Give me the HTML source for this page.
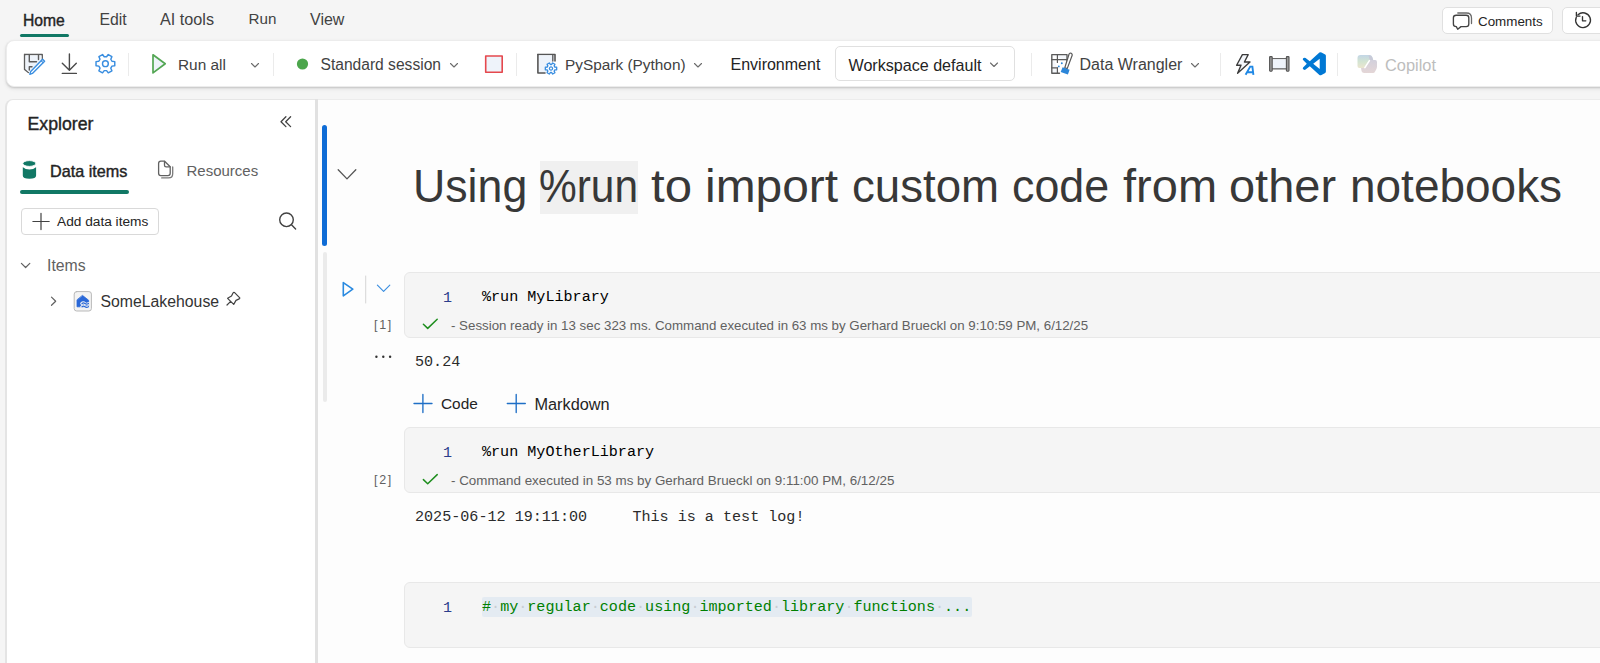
<!DOCTYPE html>
<html><head><meta charset="utf-8">
<style>
*{margin:0;padding:0;box-sizing:border-box}
html,body{width:1600px;height:663px;overflow:hidden;background:#f5f5f5;font-family:"Liberation Sans",sans-serif;color:#242424}
.a{position:absolute}
.t{position:absolute;white-space:nowrap;line-height:1}
.hw{top:164px;font-size:45.8px;color:#383838;transform-origin:0 0}
.sb{-webkit-text-stroke:0.4px currentColor}
.ws{color:#c8cdd2}
.m{font-family:"Liberation Mono",monospace}
#ico{position:absolute;left:0;top:0;width:1600px;height:663px;pointer-events:none}
</style></head><body>

<!-- top tabs -->
<div class="t sb" style="left:23px;top:12.5px;font-size:15.7px;color:#242424">Home</div>
<div class="a" style="left:20px;top:34px;width:49px;height:3px;border-radius:2px;background:#117865"></div>
<div class="t" style="left:99.5px;top:12px;font-size:15.8px;color:#424242">Edit</div>
<div class="t" style="left:160px;top:11px;font-size:16.2px;color:#424242">AI tools</div>
<div class="t" style="left:248.5px;top:11px;font-size:15.2px;color:#424242">Run</div>
<div class="t" style="left:310px;top:12px;font-size:16px;color:#424242">View</div>

<!-- comments / history buttons -->
<div class="a" style="left:1441.5px;top:7px;width:111px;height:27px;border:1px solid #e0e0e0;border-radius:5px;background:#fff"></div>
<div class="t" style="left:1478px;top:15px;font-size:13.4px;color:#242424">Comments</div>
<div class="a" style="left:1562px;top:7px;width:60px;height:27px;border:1px solid #e0e0e0;border-radius:5px;background:#fff"></div>

<!-- toolbar -->
<div class="a" style="left:5.5px;top:40px;width:1610px;height:46.5px;background:#fff;border-radius:8px;box-shadow:0 1px 2px rgba(0,0,0,.14),0 2px 4px rgba(0,0,0,.08);border:1px solid #ececec"></div>
<div class="t" style="left:178px;top:56.5px;font-size:15.4px;color:#424242">Run all</div>
<div class="t" style="left:320.5px;top:56.5px;font-size:15.6px;color:#424242">Standard session</div>
<div class="t" style="left:565px;top:56.5px;font-size:15.4px;color:#424242">PySpark (Python)</div>
<div class="t" style="left:730.5px;top:56.5px;font-size:16px;color:#242424">Environment</div>
<div class="a" style="left:835px;top:45.5px;width:180px;height:35px;border:1px solid #e0e0e0;border-radius:5px"></div>
<div class="t" style="left:848.5px;top:56.5px;font-size:16.1px;color:#242424">Workspace default</div>
<div class="t" style="left:1079.5px;top:56.5px;font-size:16px;color:#424242">Data Wrangler</div>
<div class="t" style="left:1385px;top:56.5px;font-size:16.4px;color:#bdbdbd">Copilot</div>
<!-- separators -->
<div class="a" style="left:128px;top:52.5px;width:1px;height:23px;background:#ebebeb"></div>
<div class="a" style="left:273px;top:52.5px;width:1px;height:23px;background:#ebebeb"></div>
<div class="a" style="left:516px;top:52.5px;width:1px;height:23px;background:#ebebeb"></div>
<div class="a" style="left:1030.5px;top:52.5px;width:1px;height:23px;background:#ebebeb"></div>
<div class="a" style="left:1220px;top:52.5px;width:1px;height:23px;background:#ebebeb"></div>
<div class="a" style="left:1336.5px;top:52.5px;width:1px;height:23px;background:#ebebeb"></div>

<!-- explorer panel -->
<div class="a" style="left:5px;top:99px;width:312px;height:600px;background:#fff;border:1px solid #e6e6e6;border-left:2px solid #e4e4e4;border-radius:8px 0 0 0"></div>
<div class="a" style="left:315px;top:99px;width:3px;height:570px;background:#e1e1e1"></div>
<div class="t sb" style="left:27.5px;top:116px;font-size:17.7px;color:#242424">Explorer</div>
<div class="t sb" style="left:50px;top:163px;font-size:16.2px;color:#242424">Data items</div>
<div class="a" style="left:20px;top:190px;width:109px;height:4px;border-radius:2px;background:#117865"></div>
<div class="t" style="left:186.5px;top:163px;font-size:15px;color:#616161">Resources</div>
<div class="a" style="left:20.5px;top:208px;width:138px;height:27px;border:1px solid #d9d9d9;border-radius:4px"></div>
<div class="t" style="left:57px;top:215px;font-size:13.7px;color:#242424">Add data items</div>
<div class="t" style="left:47px;top:257.5px;font-size:15.8px;color:#616161">Items</div>
<div class="t" style="left:100.5px;top:293.5px;font-size:15.8px;color:#333">SomeLakehouse</div>

<!-- notebook area -->
<div class="a" style="left:318px;top:99px;width:1300px;height:600px;background:#fdfdfd;border-top:1px solid #ececec"></div>
<div class="a" style="left:322px;top:125px;width:5px;height:121px;border-radius:3px;background:#0f6cd6"></div>
<div class="a" style="left:322.5px;top:251.5px;width:4.5px;height:150px;border-radius:3px;background:#ebebeb"></div>

<!-- heading -->
<div class="a" style="left:539.5px;top:161px;width:98.5px;height:52.5px;background:#f0f0f0"></div>
<div class="t hw" style="left:412.86px;transform:scaleX(0.9759)">Using</div>
<div class="t hw" style="left:538.98px;transform:scaleX(0.9267)">%run</div>
<div class="t hw" style="left:651.01px;transform:scaleX(1.0738)">to</div>
<div class="t hw" style="left:704.94px;transform:scaleX(1.0460)">import</div>
<div class="t hw" style="left:851.96px;transform:scaleX(0.9967)">custom</div>
<div class="t hw" style="left:1011.97px;transform:scaleX(0.9776)">code</div>
<div class="t hw" style="left:1122.99px;transform:scaleX(1.0268)">from</div>
<div class="t hw" style="left:1229.00px;transform:scaleX(1.0253)">other</div>
<div class="t hw" style="left:1349.96px;transform:scaleX(1.0036)">notebooks</div>


<!-- cell 1 -->
<div class="a" style="left:404px;top:271.5px;width:1300px;height:66px;background:#f5f5f5;border:1px solid #e8e8e8;border-radius:6px"></div>
<div class="t m" style="left:443px;top:290.5px;font-size:15.1px;color:#2b3d8c">1</div>
<div class="t m" style="left:482px;top:290px;font-size:15.1px;color:#000">%run MyLibrary</div>
<div class="t" style="left:451px;top:318.5px;font-size:13.3px;color:#616161">- Session ready in 13 sec 323 ms. Command executed in 63 ms by Gerhard Brueckl on 9:10:59 PM, 6/12/25</div>
<div class="t" style="left:374px;top:318.5px;font-size:12.5px;color:#616161;letter-spacing:1.7px">[1]</div>
<div class="t m" style="left:415px;top:355px;font-size:15.1px;color:#2b2b2b">50.24</div>
<div class="t" style="left:441px;top:396px;font-size:15.4px;color:#242424">Code</div>
<div class="t" style="left:534.5px;top:396px;font-size:16.3px;color:#242424">Markdown</div>

<!-- cell 2 -->
<div class="a" style="left:404px;top:426.5px;width:1300px;height:66px;background:#f5f5f5;border:1px solid #e8e8e8;border-radius:6px"></div>
<div class="t m" style="left:443px;top:445.5px;font-size:15.1px;color:#2b3d8c">1</div>
<div class="t m" style="left:482px;top:445px;font-size:15.1px;color:#000">%run MyOtherLibrary</div>
<div class="t" style="left:451px;top:473.5px;font-size:13.4px;color:#616161">- Command executed in 53 ms by Gerhard Brueckl on 9:11:00 PM, 6/12/25</div>
<div class="t" style="left:374px;top:473.5px;font-size:12.5px;color:#616161;letter-spacing:1.7px">[2]</div>
<div class="t m" style="left:415px;top:510px;font-size:15.1px;color:#2b2b2b;white-space:pre">2025-06-12 19:11:00     This is a test log!</div>

<!-- cell 3 -->
<div class="a" style="left:404px;top:582px;width:1300px;height:66px;background:#f5f5f5;border:1px solid #e8e8e8;border-radius:6px"></div>
<div class="a" style="left:482px;top:596.5px;width:490px;height:20px;background:#e4ebf2;border-radius:2px"></div>
<div class="t m" style="left:443px;top:600.5px;font-size:15.1px;color:#2b3d8c">1</div>
<div class="t m" style="left:482px;top:600px;font-size:15.1px;color:#008000;white-space:pre">#<span class="ws">·</span>my<span class="ws">·</span>regular<span class="ws">·</span>code<span class="ws">·</span>using<span class="ws">·</span>imported<span class="ws">·</span>library<span class="ws">·</span>functions<span class="ws">·</span>...</div>

<svg id="ico" viewBox="0 0 1600 663" fill="none" stroke-linecap="round" stroke-linejoin="round">
<!-- floppy + pencil -->
<path d="M24.6,54.6 H42.2 V61.5" stroke="#5c5c5c" stroke-width="1.5"/>
<path d="M24.6,54.6 V69.4 L28.4,72.4" stroke="#5c5c5c" stroke-width="1.5"/>
<path d="M25.5,55.5 H41.5 V62 L31,72 H28.6 L25.5,69.2 Z" fill="#eef3fa"/>
<path d="M29.3,54.8 V61.8 H36.5" stroke="#5c5c5c" stroke-width="1.4"/>
<path d="M38.5,54.8 V59.6" stroke="#5c5c5c" stroke-width="1.4"/>
<path d="M29.3,70 V66.8 H32" stroke="#5c5c5c" stroke-width="1.4"/>
<path d="M42.6,59.2 L44.6,61.2 L32.4,73.4 L29.8,74.3 L30.7,71.6 Z" fill="#fff" stroke="#3a8ee0" stroke-width="1.4"/>
<path d="M41.2,60.8 L43.1,62.7" stroke="#3a8ee0" stroke-width="1.1"/>
<!-- download -->
<path d="M69.4,54 V70 M62.3,63.3 L69.4,70.3 L76.3,63.3 M62.3,73.4 H76.4" stroke="#4a4a4a" stroke-width="1.4"/>
<!-- gear -->
<g transform="translate(105.4,63.7)">
<path d="M9.37,-2.09 L9.37,2.09 L6.56,2.44 L5.39,4.46 L6.50,7.07 L2.87,9.16 L1.17,6.90 L-1.17,6.90 L-2.87,9.16 L-6.50,7.07 L-5.39,4.46 L-6.56,2.44 L-9.37,2.09 L-9.37,-2.09 L-6.56,-2.44 L-5.39,-4.46 L-6.50,-7.07 L-2.87,-9.16 L-1.17,-6.90 L1.17,-6.90 L2.87,-9.16 L6.50,-7.07 L5.39,-4.46 L6.56,-2.44 Z" stroke="#3a8ee0" stroke-width="1.45"/>
<circle r="2.9" stroke="#3a8ee0" stroke-width="1.45"/>
</g>
<!-- play green -->
<path d="M153,54.8 L165.2,63.8 L153,72.9 Z" fill="#eef3fa" stroke="#53a653" stroke-width="1.7"/>
<!-- chevrons toolbar -->
<path d="M251.5,63.5 L255,67 L258.5,63.5" stroke="#6b6b6b" stroke-width="1.1"/>
<path d="M450.5,63.5 L454,67 L457.5,63.5" stroke="#6b6b6b" stroke-width="1.1"/>
<path d="M694.5,63.5 L698,67 L701.5,63.5" stroke="#6b6b6b" stroke-width="1.1"/>
<path d="M990.5,63 L994,66.5 L997.5,63" stroke="#6b6b6b" stroke-width="1.1"/>
<path d="M1191.5,63.5 L1195,67 L1198.5,63.5" stroke="#6b6b6b" stroke-width="1.1"/>
<!-- green dot -->
<circle cx="302.5" cy="64" r="5.6" fill="#4ca64c"/>
<!-- stop -->
<rect x="485.7" y="56" width="16.5" height="16.2" fill="#eef3fa" stroke="#e5484d" stroke-width="1.6"/>
<!-- pyspark notebook icon -->
<path d="M537.9,54.5 H555 V61" stroke="#555" stroke-width="1.6" fill="none"/>
<path d="M538.7,55.3 H554 V61 L546,72.5 H538.7 Z" fill="#eef3fa"/>
<path d="M537.9,54.5 V73 H545" stroke="#555" stroke-width="1.6"/>
<path d="M552.8,54.8 V61" stroke="#555" stroke-width="1.3"/>
<g transform="translate(551,68.5)">
<path d="M5.66,-1.27 L5.66,1.27 L3.84,1.43 L3.16,2.61 L3.93,4.27 L1.73,5.53 L0.68,4.04 L-0.68,4.04 L-1.73,5.53 L-3.93,4.27 L-3.16,2.61 L-3.84,1.43 L-5.66,1.27 L-5.66,-1.27 L-3.84,-1.43 L-3.16,-2.61 L-3.93,-4.27 L-1.73,-5.53 L-0.68,-4.04 L0.68,-4.04 L1.73,-5.53 L3.93,-4.27 L3.16,-2.61 L3.84,-1.43 Z" stroke="#3a8ee0" stroke-width="1.35" fill="#fff"/>
<circle r="1.6" stroke="#3a8ee0" stroke-width="1.3"/>
</g>
<!-- data wrangler -->
<path d="M1051.8,54.6 H1067 V61 M1051.8,54.6 V73.2 H1059.5" fill="#f4f7fb" stroke="#5a5a5a" stroke-width="1.35"/>
<path d="M1051.8,59.7 H1066.5 M1057.4,54.6 V62.5 M1051.8,67.8 H1057.4 M1057.4,67.6 V73.2" stroke="#5a5a5a" stroke-width="1.2"/>
<path d="M1070.3,53 Q1072.4,53.3 1072.2,55.3 L1067.2,68.6 L1064.8,67.7 L1069,54.2 Q1069.4,53 1070.3,53 Z" fill="#fff" stroke="#5a5a5a" stroke-width="1.2"/>
<path d="M1062.6,67.2 L1069.6,69.8 L1067.9,74.6 L1060.7,72 Z" fill="#2c86d9"/>
<circle cx="1061.8" cy="63.2" r="0.95" fill="#2c86d9"/>
<circle cx="1058.8" cy="66.4" r="0.95" fill="#2c86d9"/>
<!-- lightning A -->
<path d="M1242.4,54.6 H1248.2 L1244.4,62 H1250 L1237.6,73.2 L1241,65.2 H1236.6 Z" fill="#f4f7fb" stroke="#3a3a3a" stroke-width="1.35"/>
<path d="M1245.6,74.8 L1250.2,66.6 H1252.4 L1253.4,74.8 M1247.6,72.3 H1252.9" stroke="#1f88e5" stroke-width="1.9" stroke-linecap="butt" stroke-linejoin="miter"/>
<!-- frame -->
<path d="M1272,58.6 H1286.5 M1272,68.8 H1286.5" stroke="#666" stroke-width="1.4"/>
<rect x="1272.5" y="59.4" width="13.5" height="8.8" fill="#eef3fa"/>
<rect x="1269.6" y="56.6" width="2.6" height="14.6" rx="0.6" fill="#999" stroke="#555" stroke-width="1.1"/>
<rect x="1286.4" y="56.6" width="2.6" height="14.6" rx="0.6" fill="#999" stroke="#555" stroke-width="1.1"/>
<!-- vscode -->
<path fill-rule="evenodd" fill="#0078d4" d="M1319.4,52.4 Q1320.5,52 1321.5,52.6 L1325.2,54.6 Q1325.9,55 1325.9,56 V71.6 Q1325.9,72.6 1325.2,73 L1321.5,75 Q1320.5,75.6 1319.4,75.1 L1309.8,66.3 L1305.6,69.6 Q1304.6,70.3 1303.6,69.6 L1303,69 Q1302.5,68.4 1303.1,67.6 L1306.8,63.8 L1303.1,60 Q1302.5,59.2 1303,58.6 L1303.6,58 Q1304.6,57.3 1305.6,58 L1309.8,61.3 Z M1319.7,58.7 L1313.2,63.8 L1319.7,68.9 Z"/>
<!-- copilot (disabled) -->
<defs><linearGradient id="cg1" x1="0" y1="0" x2="0" y2="1"><stop offset="0" stop-color="#c3d6e6"/><stop offset="0.5" stop-color="#d3e4d2"/><stop offset="1" stop-color="#ebe6cf"/></linearGradient>
<linearGradient id="cg2" x1="0" y1="0" x2="0" y2="1"><stop offset="0" stop-color="#d2d0dc"/><stop offset="1" stop-color="#e4d6d6"/></linearGradient></defs>
<path d="M1360.5,55 H1369.5 Q1371.5,55 1372.2,57 L1373.2,60 L1369.6,60 L1364.5,68 H1359.3 Q1357.5,68 1357.5,66 V58 Q1357.5,55 1360.5,55 Z" fill="url(#cg1)"/>
<path d="M1368.5,55.2 Q1371.5,55 1372.2,57 L1373.2,60 L1369.6,60 Z" fill="#c8cad8"/>
<path d="M1370,60 H1375.2 Q1377,60 1377,62 V66.5 Q1377,68 1376.2,69.5 L1374.8,72 Q1374.3,72.9 1373.2,72.9 H1364 Q1362.2,72.9 1361.6,71.2 L1361,68 H1364.6 Z" fill="url(#cg2)"/>
<path d="M1369.4,60.6 L1364.9,67.6" stroke="#fff" stroke-width="1.6"/>
<!-- comments icon -->
<path d="M1457.8,13 H1466.5 Q1471.5,13 1471.5,18 V23.5" stroke="#6a6a6a" stroke-width="1.3"/>
<path d="M1456.2,15.2 H1466.2 Q1468.8,15.2 1468.8,17.8 V24 Q1468.8,26.6 1466.2,26.6 H1461 L1457.7,29.2 L1456.3,26.6 Q1453.4,26.6 1453.4,24 V17.8 Q1453.4,15.2 1456.2,15.2 Z" fill="#fff" stroke="#424242" stroke-width="1.35"/>
<!-- history -->
<path d="M1576.3,17.2 A7.4,7.4 0 1 0 1578,14.8" stroke="#333" stroke-width="1.35"/>
<path d="M1576.4,12.5 V16.1 H1580" stroke="#333" stroke-width="1.35"/>
<path d="M1582.5,16.6 V20.8 H1585.8" stroke="#333" stroke-width="1.35"/>
<!-- explorer << -->
<path d="M285.9,116.8 L281,121.7 L285.9,126.6 M290.6,116.8 L285.7,121.7 L290.6,126.6" stroke="#424242" stroke-width="1.3"/>
<!-- database -->
<path d="M22.8,167.3 V175.5 Q22.8,178.8 29.45,178.8 Q36.1,178.8 36.1,175.5 V167.3 Q36.1,167.2 36,167.3 Q33.5,169.6 29.45,169.6 Q25.4,169.6 22.9,167.3 Z" fill="#117865"/>
<ellipse cx="29.45" cy="163.5" rx="6.65" ry="2.9" fill="#117865" stroke="#fff" stroke-width="0.9"/>
<!-- resources -->
<path d="M161.7,177.9 H168.5 Q172.7,177.9 172.7,173.7 V167" stroke="#7a7a7a" stroke-width="1.3"/>
<path d="M160.8,161.2 H164.6 L170.2,166.8 V173.3 Q170.2,175.6 167.9,175.6 H160.8 Q158.6,175.6 158.6,173.3 V163.5 Q158.6,161.2 160.8,161.2 Z" fill="#fff" stroke="#616161" stroke-width="1.3"/>
<path d="M164.5,161.3 V165.2 Q164.5,166.8 166.1,166.8 H170" stroke="#616161" stroke-width="1.3"/>
<!-- add plus -->
<path d="M41,213.3 V229.6 M32.9,221.5 H49.2" stroke="#424242" stroke-width="1.2"/>
<!-- search -->
<circle cx="286.5" cy="219.8" r="6.8" stroke="#424242" stroke-width="1.4"/>
<path d="M291.5,224.8 L295.6,228.9" stroke="#424242" stroke-width="1.4"/>
<!-- items chevrons -->
<path d="M21.4,263.3 L25.6,267.5 L29.8,263.3" stroke="#616161" stroke-width="1.2"/>
<path d="M51.5,297.1 L55.7,301.2 L51.5,305.3" stroke="#616161" stroke-width="1.2"/>
<!-- lakehouse -->
<rect x="74.2" y="291.6" width="17.2" height="19.4" rx="2.5" fill="#f3f3f3" stroke="#b9b9b9" stroke-width="1"/>
<path d="M82.7,295.6 L88.6,300.2 V306.8 H77 V300.2 Z" fill="#2a68d8" stroke="#2a68d8" stroke-width="0.8" stroke-linejoin="round"/>
<path d="M81.5,303.5 Q83.2,301.8 85,303.5 Q86.6,305 88.5,303.3 M81.5,306.8 Q83.2,305 85,306.8 Q86.6,308.2 88.5,306.6" stroke="#f3f3f3" stroke-width="2.6"/>
<path d="M82,303.5 Q83.4,302.3 85,303.5 Q86.6,304.7 88.4,303.4 M82,306.8 Q83.4,305.6 85,306.8 Q86.6,308 88.4,306.7" stroke="#2a68d8" stroke-width="1.2"/>
<!-- pin -->
<path d="M234.6,292.6 L239.8,297.8 Q239.9,298.6 239.2,298.9 L236,300.4 L233.7,304.4 L227.6,298.3 L231.5,296.1 L233,293 Q233.7,292 234.6,292.6 Z M230.7,301.3 L227,305" stroke="#424242" stroke-width="1.2"/>
<!-- heading chevron -->
<path d="M338.2,169.8 L347,178.9 L355.8,169.8" stroke="#555" stroke-width="1.3"/>
<!-- cell controls -->
<path d="M343.3,282.6 L352.8,289.2 L343.3,295.8 Z" stroke="#2a8ae0" stroke-width="1.6"/>
<path d="M365.7,276 V303" stroke="#d6d6d6" stroke-width="1"/>
<path d="M377.4,285.2 L383.6,291.3 L389.8,285.2" stroke="#3a8ee0" stroke-width="1.15"/>
<!-- checks -->
<path d="M423.4,324.3 L427.7,328.4 L437.2,319.3" stroke="#1e8e1e" stroke-width="1.5"/>
<path d="M423.4,479.6 L427.7,483.7 L437.2,474.6" stroke="#1e8e1e" stroke-width="1.5"/>
<!-- ... -->
<circle cx="376.4" cy="356.8" r="1.2" fill="#333"/>
<circle cx="383.3" cy="356.8" r="1.2" fill="#333"/>
<circle cx="390.1" cy="356.8" r="1.2" fill="#333"/>
<!-- plus code / markdown -->
<path d="M422.9,394.5 V412.5 M414,403.5 H432" stroke="#1f6fc6" stroke-width="1.35"/>
<path d="M516.2,394.5 V412.5 M507.3,403.5 H525.3" stroke="#1f6fc6" stroke-width="1.35"/>
</svg>
</body></html>
